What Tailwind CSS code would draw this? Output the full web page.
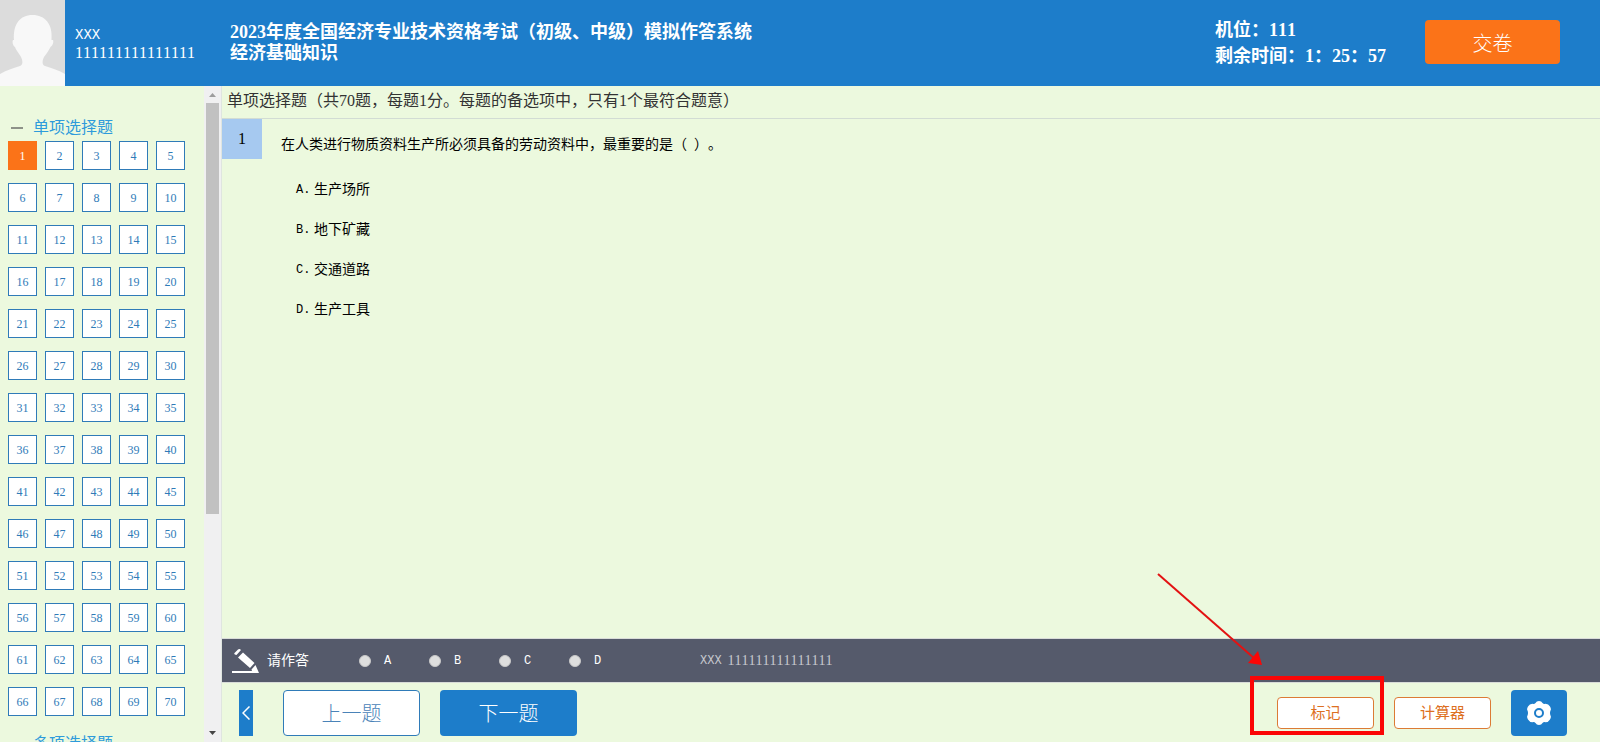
<!DOCTYPE html>
<html lang="zh-CN">
<head>
<meta charset="utf-8">
<title>模拟作答系统</title>
<script src="https://cdn.jsdelivr.net/npm/@tailwindcss/browser@4"></script>
</head>
<body class="relative flex h-screen flex-col overflow-hidden bg-[#ecf9de] font-['Liberation_Serif','Noto_Sans_CJK_SC',sans-serif] text-black [font-kerning:none] [text-spacing-trim:space-all]">
<header class="flex h-[86px] shrink-0 items-start bg-[#1d7dca] text-white">
  <svg class="h-[86px] w-[65px] shrink-0" viewBox="0 0 65 86" aria-hidden="true">
    <rect width="65" height="86" fill="#dcdcdc"/>
    <path d="M0 86V74C7 70 14 68 20 66C23 65 23 61 21 57C18 52 16 50 15 47C13 46 12 42 13 40H14C13 24 20 15 32.500 15C45 15 53 24 51.500 40H53C54 43 52 46 50.500 47C49 50 47 53 44 57C42 61 42 65 45 66C51 68 58 70 65 74V86Z" fill="#f8f8f8"/>
  </svg>
  <div class="w-[165px] pt-[26px] pl-[10px] leading-[18px]">
    <p class="font-['Liberation_Mono',monospace] text-sm leading-[18px]">XXX</p>
    <p class="text-base leading-[18px]">111111111111111</p>
  </div>
  <div class="flex-1 pt-[22px] text-lg leading-[21px] font-bold">
    <h1>2023年度全国经济专业技术资格考试（初级、中级）模拟作答系统</h1>
    <p>经济基础知识</p>
  </div>
  <div class="w-[210px] pt-[17px] text-lg leading-[26px] font-bold">
    <p>机位：111</p>
    <p>剩余时间：1：25：57</p>
  </div>
  <button type="button" class="mt-5 mr-10 h-11 w-[135px] rounded bg-[#fb7318] pt-1 text-xl font-light">交卷</button>
</header>

<div class="flex min-h-0 flex-1">
  <aside class="flex w-[222px] shrink-0 border-r border-[#dfe5e0]">
    <nav class="flex-1 overflow-hidden px-2 pt-[30px]" aria-label="题号">
      <h2 class="mb-px flex h-6 items-center pl-[3px] text-base leading-5 text-[#2e9bdb]"><span class="mr-[10px] h-[2px] w-3 bg-[#8d9288]"></span>单项选择题</h2>
      <div id="nums" class="grid grid-cols-[repeat(5,29px)] gap-x-2 gap-y-[13px]"></div>
      <h2 class="mt-4 flex h-6 items-center pl-[25px] text-base leading-5 text-[#2e9bdb]">多项选择题</h2>
    </nav>
    <div class="flex w-[17px] flex-col items-center bg-[#f0f0f1]" aria-hidden="true">
      <svg class="h-[17px] w-[17px]" viewBox="0 0 17 17"><path d="M5 11L8.500 7L12 11Z" fill="#9d9d9d"/></svg>
      <div class="min-h-0 w-full flex-1 px-[2px]"><div class="h-[66%] bg-[#c1c1c1]"></div></div>
      <svg class="h-[17px] w-[17px]" viewBox="0 0 17 17"><path d="M5 6L8.500 10L12 6Z" fill="#454545"/></svg>
    </div>
  </aside>

  <main class="flex min-w-0 flex-1 flex-col">
    <h2 class="h-[33px] shrink-0 border-b border-[#d2dcd4] pl-[5px] text-base leading-[30px] text-[#333]">单项选择题（共70题，每题1分。每题的备选项中，只有1个最符合题意）</h2>
    <section class="flex min-h-0 flex-1 items-start text-sm">
      <div class="flex h-10 w-10 items-center justify-center bg-[#a6c9f0] text-base">1</div>
      <div class="pt-4 pl-[19px]">
        <p class="leading-5">在人类进行物质资料生产所必须具备的劳动资料中，最重要的是（&nbsp;&nbsp;）。</p>
        <ol class="mt-[15px] pl-[15px] leading-10">
          <li class="flex"><span class="w-[18px] font-['Liberation_Mono',monospace] text-xs leading-10">A.</span>生产场所</li>
          <li class="flex"><span class="w-[18px] font-['Liberation_Mono',monospace] text-xs leading-10">B.</span>地下矿藏</li>
          <li class="flex"><span class="w-[18px] font-['Liberation_Mono',monospace] text-xs leading-10">C.</span>交通道路</li>
          <li class="flex"><span class="w-[18px] font-['Liberation_Mono',monospace] text-xs leading-10">D.</span>生产工具</li>
        </ol>
      </div>
    </section>

    <div class="flex h-[45px] shrink-0 items-center border-y border-[#d9dcd9] bg-[#555a6b] pl-[10px] text-sm text-white">
      <svg class="mr-2 h-7 w-[27px]" viewBox="0 0 27 28" fill="#fff" aria-hidden="true">
        <path d="M2.500 6L6 2.500Q7.500 1.500 9 3L4.500 8Q1.500 7.500 2.500 6ZM6 10.500L11 5.500L22.500 16L18 21ZM19.500 22.500L23.500 18L27 26H0V24H20Z"/>
      </svg>
      <span class="w-[92px]">请作答</span>
      <fieldset class="flex font-['Liberation_Mono',monospace] text-xs">
        <label class="flex w-[70px] items-center gap-[13px]"><input type="radio" name="answer" value="A" class="h-3 w-3 appearance-none rounded-full border border-[#c8c8c8] bg-[#dedede] checked:bg-[#1d7dca]">A</label>
        <label class="flex w-[70px] items-center gap-[13px]"><input type="radio" name="answer" value="B" class="h-3 w-3 appearance-none rounded-full border border-[#c8c8c8] bg-[#dedede] checked:bg-[#1d7dca]">B</label>
        <label class="flex w-[70px] items-center gap-[13px]"><input type="radio" name="answer" value="C" class="h-3 w-3 appearance-none rounded-full border border-[#c8c8c8] bg-[#dedede] checked:bg-[#1d7dca]">C</label>
        <label class="flex w-[70px] items-center gap-[13px]"><input type="radio" name="answer" value="D" class="h-3 w-3 appearance-none rounded-full border border-[#c8c8c8] bg-[#dedede] checked:bg-[#1d7dca]">D</label>
      </fieldset>
      <p class="ml-[61px] flex items-center gap-[6px] text-[#c6c8ce]"><span class="font-['Liberation_Mono',monospace] text-xs">XXX</span><span>111111111111111</span></p>
    </div>

    <footer class="flex h-[59px] shrink-0 items-center pr-[33px] pl-[17px]">
      <button type="button" aria-label="收起题号" class="mr-[30px] flex h-[46px] w-[14px] items-center justify-center bg-[#1d7dca]">
        <svg class="h-[14px] w-2" viewBox="0 0 8 14" fill="none" stroke="#fff" stroke-width="1.500"><path d="M7.500 .5L1 7L7.500 13.500"/></svg>
      </button>
      <button type="button" class="mr-5 h-[46px] w-[137px] rounded border border-[#2f7bb8] bg-white pt-[2px] text-xl font-light text-[#4a83b8]">上一题</button>
      <button type="button" class="h-[46px] w-[137px] rounded bg-[#1d7dca] pt-[2px] text-xl font-light text-white">下一题</button>
      <div class="ml-auto flex items-center gap-5">
        <button type="button" class="h-8 w-[97px] rounded border border-[#dc7b35] bg-white pt-[2px] text-[15px] text-[#dd7022]">标记</button>
        <button type="button" class="h-8 w-[97px] rounded border border-[#dc7b35] bg-white pt-[2px] text-[15px] text-[#dd7022]">计算器</button>
        <button type="button" aria-label="设置" class="flex h-[46px] w-14 items-center justify-center rounded bg-[#1d7dca]">
          <svg class="h-6 w-6" viewBox="0 0 24 24" fill="none" stroke="#fff" aria-hidden="true">
            <path d="M8.500 2Q9.500 0 12 0Q14.500 0 15.500 2Q16.500 3.200 18.500 2.800Q21.500 2.800 23 5.500Q24.500 8 23.500 9.500Q22.500 12 23.500 14.500Q24.500 16 23 18.500Q21.500 21.200 18.500 21.200Q16.500 20.800 15.500 22Q14.500 24 12 24Q9.500 24 8.500 22Q7.500 20.800 5.500 21.200Q2.500 21.200 1 18.500Q-.5 16 .5 14.500Q1.500 12 .5 9.500Q-.5 8 1 5.500Q2.500 2.800 5.500 2.800Q7.500 3.200 8.500 2Z" fill="#fff" stroke="none"/>
            <circle cx="12" cy="12" r="4" stroke="#1d7dca" stroke-width="2"/>
          </svg>
        </button>
      </div>
    </footer>
  </main>
</div>

<!-- Callout pointing at the mark button -->
<svg class="pointer-events-none absolute right-[216px] bottom-[7px] h-[162px] w-[228px]" viewBox="0 0 228 162" aria-hidden="true">
  <path d="M2 1L99 86" stroke="#e31212" stroke-width="2" fill="none"/>
  <path d="M102 78L92 90L106 92Z" fill="#fb0606"/>
  <rect x="96" y="105" width="130" height="55" fill="none" stroke="#fb0606" stroke-width="4"/>
</svg>

<script>
  const nums = document.getElementById('nums');
  for (let i = 1; i <= 70; i++) {
    const b = document.createElement('button');
    b.type = 'button';
    b.textContent = i;
    b.className = i === 1
      ? 'h-[29px] w-[29px] border border-[#fb7318] bg-[#fb7318] text-xs text-white'
      : 'h-[29px] w-[29px] border border-[#2f7bb8] bg-white text-xs text-[#2f7bb8]';
    nums.append(b);
  }
</script>
</body>
</html>
